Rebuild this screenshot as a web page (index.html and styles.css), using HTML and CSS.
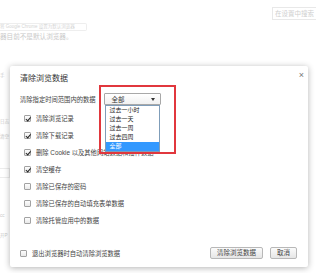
FILE: index.html
```html
<!DOCTYPE html>
<html lang="zh-CN">
<head>
    <meta charset="UTF-8">
    <meta name="viewport" content="width=device-width, initial-scale=1.0">
    <title>清除浏览数据</title>
    <link rel="stylesheet" href="styles.css">
</head>
<body>
    <!-- settings page behind the overlay -->
    <div class="page">
        <div class="search-row">
            <div class="search-box">在设置中搜索</div>
        </div>
        <div class="default-pill">将 Google Chrome 设置为默认浏览器</div>
        <div class="default-note">器目前不是默认浏览器。</div>
        <div class="side-line s1">手</div>
        <div class="side-line s2">日志</div>
        <div class="side-line s3">清空</div>
        <div class="side-btn"></div>
        <div class="side-line s4">cc</div>
        <div class="side-line s5">开P</div>
    </div>

    <div class="dialog">
        <div class="dialog-head">
            <div class="dialog-title">清除浏览数据</div>
            <div class="dialog-close">×</div>
        </div>

        <div class="time-row">
            <div class="time-label">清除指定时间范围内的数据</div>
            <div class="select-wrap">
                <div class="select">
                    <span>全部</span>
                    <span class="select-arrow"></span>
                </div>
                <div class="select-list">
                    <div class="option">过去一小时</div>
                    <div class="option">过去一天</div>
                    <div class="option">过去一周</div>
                    <div class="option">过去四周</div>
                    <div class="option selected">全部</div>
                </div>
            </div>
        </div>

        <div class="check-list">
            <div class="check-row"><span class="cb checked"></span>清除浏览记录</div>
            <div class="check-row"><span class="cb checked"></span>清除下载记录</div>
            <div class="check-row"><span class="cb checked"></span>删除 Cookie 以及其他网站数据和插件数据</div>
            <div class="check-row"><span class="cb checked"></span>清空缓存</div>
            <div class="check-row"><span class="cb"></span>清除已保存的密码</div>
            <div class="check-row"><span class="cb"></span>清除已保存的自动填充表单数据</div>
            <div class="check-row"><span class="cb"></span>清除托管应用中的数据</div>
        </div>

        <div class="dialog-foot">
            <div class="foot-check"><span class="cb"></span>退出浏览器时自动清除浏览数据</div>
            <div class="foot-buttons">
                <button class="btn">清除浏览数据</button>
                <button class="btn">取消</button>
            </div>
        </div>
    </div>

    <div class="mark-box"></div>
</body>
</html>
```

FILE: styles.css
```css
body {
    margin: 0;
    width: 316px;
    height: 273px;
    overflow: hidden;
    position: relative;
    background-color: #fff;
    font-family: "Liberation Sans", "Noto Sans CJK SC", sans-serif;
}

/* background page */
.page {
    display: flex;
    flex-direction: column;
    color: #c9c9c9;
}

.search-row {
    display: flex;
    justify-content: flex-end;
    margin-top: 7px;
}

.search-box {
    width: 44px;
    height: 13px;
    box-sizing: border-box;
    border: 1px solid #e8e8e8;
    border-right: none;
    padding-left: 2px;
    font-size: 6.5px;
    line-height: 11px;
    color: #cfcfcf;
    white-space: nowrap;
}

.default-pill {
    width: 87px;
    height: 8px;
    margin-top: 3px;
    box-sizing: border-box;
    border: 1px solid #eeeeee;
    border-left: none;
    border-radius: 0 2px 2px 0;
    font-size: 4.5px;
    line-height: 6px;
    color: #d4d4d4;
    white-space: nowrap;
}

.default-note {
    margin-top: 2px;
    font-size: 6.6px;
    line-height: 8px;
    white-space: nowrap;
}

.side-line {
    font-size: 4.5px;
    line-height: 8px;
    white-space: nowrap;
}

.s1 { margin-top: 31px; }
.s2 { margin-top: 38px; }
.s3 { margin-top: 7px; }
.s4 { margin-top: 34px; }
.s5 { margin-top: 12px; }

.side-btn {
    width: 10px;
    height: 10px;
    margin-top: 27px;
    box-sizing: border-box;
    border: 1px solid #ececec;
    border-left: none;
}

/* dialog */
.dialog {
    position: absolute;
    left: 10px;
    top: 66px;
    width: 298px;
    height: 201px;
    box-sizing: border-box;
    padding: 0 10px;
    background-color: #fff;
    box-shadow: 0 1px 6px rgba(0, 0, 0, 0.3);
    border-radius: 2px;
    display: flex;
    flex-direction: column;
    color: #444;
}

.dialog-head {
    display: flex;
    justify-content: space-between;
    margin-top: 8px;
}

.dialog-title {
    font-size: 8px;
    line-height: 10px;
    color: #333;
}

.dialog-close {
    margin-top: -4px;
    margin-right: -6px;
    font-size: 9px;
    line-height: 10px;
    color: #777;
}

.time-row {
    display: flex;
    align-items: center;
    gap: 8px;
    margin-top: 9px;
    font-size: 6.3px;
}

.time-label {
    white-space: nowrap;
}

.select-wrap {
    position: relative;
}

.select {
    width: 57px;
    height: 12px;
    box-sizing: border-box;
    border: 1px solid #a8a8a8;
    border-radius: 1px;
    background: linear-gradient(#ffffff, #f1f1f1);
    display: flex;
    align-items: center;
    justify-content: space-between;
    padding: 0 5px 0 7px;
    font-size: 6.5px;
    color: #333;
}

.select-arrow {
    width: 0;
    height: 0;
    border-left: 2.5px solid transparent;
    border-right: 2.5px solid transparent;
    border-top: 3px solid #333;
}

.select-list {
    position: absolute;
    left: 1px;
    top: 100%;
    width: 55px;
    box-sizing: border-box;
    border: 1px solid #7f9db9;
    background-color: #fff;
    font-size: 6px;
    color: #222;
}

.option {
    height: 9px;
    line-height: 9px;
    padding-left: 4px;
    white-space: nowrap;
}

.option.selected {
    background-color: #3399ff;
    color: #fff;
}

.check-list {
    margin-top: 5px;
    display: flex;
    flex-direction: column;
}

.check-row {
    height: 17px;
    display: flex;
    align-items: center;
    gap: 5px;
    padding-left: 4px;
    font-size: 6.3px;
    white-space: nowrap;
}

.cb {
    width: 7px;
    height: 7px;
    box-sizing: border-box;
    border: 1px solid #a2a2a2;
    border-radius: 1px;
    background: linear-gradient(#fdfdfd, #e9e9e9);
    position: relative;
    flex-shrink: 0;
}

.cb.checked::after {
    content: "";
    position: absolute;
    left: 1.5px;
    top: -0.5px;
    width: 1.5px;
    height: 3.5px;
    border-right: 1.5px solid #222;
    border-bottom: 1.5px solid #222;
    transform: rotate(40deg);
}

.dialog-foot {
    margin-top: auto;
    margin-bottom: 8px;
    display: flex;
    align-items: center;
    justify-content: space-between;
}

.foot-check {
    display: flex;
    align-items: center;
    gap: 5px;
    font-size: 6.3px;
    white-space: nowrap;
}

.foot-buttons {
    display: flex;
    gap: 7px;
    margin-right: 1px;
}

.btn {
    height: 12px;
    box-sizing: border-box;
    padding: 0 5px;
    border: 1px solid #b8b8b8;
    border-radius: 2px;
    background: linear-gradient(#fbfbfb, #e6e6e6);
    font-family: "Liberation Sans", "Noto Sans CJK SC", sans-serif;
    font-size: 6.5px;
    line-height: 10px;
    color: #444;
}

.btn:first-child {
    width: 53px;
}

.btn:last-child {
    width: 27px;
}

/* red annotation frame */
.mark-box {
    position: absolute;
    left: 99px;
    top: 85px;
    width: 77px;
    height: 69px;
    box-sizing: border-box;
    border: 2px solid #e1373d;
}
```
